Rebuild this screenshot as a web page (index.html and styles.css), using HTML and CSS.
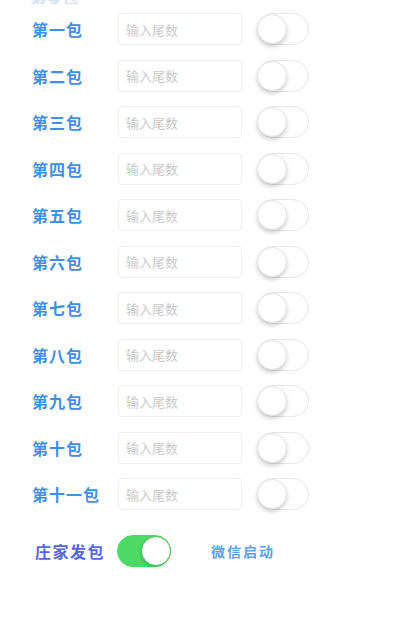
FILE: index.html
```html
<!DOCTYPE html>
<html lang="zh-CN">
<head>
<meta charset="utf-8">
<link rel="stylesheet" href="styles.css">
</head>
<body>
<div class="page">
  <div class="peek">第零包</div>
  <div class="list">
    <div class="row"><span class="label">第一包</span><span class="input">输入尾数</span><span class="switch"><span class="knob"></span></span></div>
    <div class="row"><span class="label">第二包</span><span class="input">输入尾数</span><span class="switch"><span class="knob"></span></span></div>
    <div class="row"><span class="label">第三包</span><span class="input">输入尾数</span><span class="switch"><span class="knob"></span></span></div>
    <div class="row"><span class="label">第四包</span><span class="input">输入尾数</span><span class="switch"><span class="knob"></span></span></div>
    <div class="row"><span class="label">第五包</span><span class="input">输入尾数</span><span class="switch"><span class="knob"></span></span></div>
    <div class="row"><span class="label">第六包</span><span class="input">输入尾数</span><span class="switch"><span class="knob"></span></span></div>
    <div class="row"><span class="label">第七包</span><span class="input">输入尾数</span><span class="switch"><span class="knob"></span></span></div>
    <div class="row"><span class="label">第八包</span><span class="input">输入尾数</span><span class="switch"><span class="knob"></span></span></div>
    <div class="row"><span class="label">第九包</span><span class="input">输入尾数</span><span class="switch"><span class="knob"></span></span></div>
    <div class="row"><span class="label">第十包</span><span class="input">输入尾数</span><span class="switch"><span class="knob"></span></span></div>
    <div class="row"><span class="label">第十一包</span><span class="input">输入尾数</span><span class="switch"><span class="knob"></span></span></div>
  </div>
  <div class="footer">
    <span class="banker">庄家发包</span>
    <span class="switch on"><span class="knob"></span></span>
    <span class="wechat">微信启动</span>
  </div>
</div>
</body>
</html>
```
FILE: styles.css
```css
html, body {
  margin: 0;
  padding: 0;
  background: #ffffff;
}
body {
  font-family: "Noto Sans CJK SC", "Noto Sans", sans-serif;
  width: 400px;
  height: 635px;
  overflow: hidden;
}
.page {
  display: flex;
  flex-direction: column;
}
.peek {
  height: 4px;
  overflow: hidden;
  padding-left: 30px;
  font-size: 16px;
  font-weight: bold;
  line-height: 16px;
  color: #cfe2f8;
  display: flex;
  align-items: flex-end;
}
.list {
  display: flex;
  flex-direction: column;
  padding-top: 1.75px;
}
.row {
  height: 46.5px;
  display: flex;
  align-items: center;
  padding-left: 32px;
}
.label {
  width: 86px;
  font-size: 16px;
  font-weight: bold;
  color: #3f8fe6;
  letter-spacing: 1px;
}
.input {
  box-sizing: border-box;
  width: 124px;
  height: 32px;
  border: 1px solid #efefef;
  border-radius: 4px;
  display: flex;
  align-items: center;
  padding-left: 7px;
  font-size: 13px;
  color: #c9c9c9;
}
.switch {
  box-sizing: border-box;
  margin-left: 15px;
  width: 52px;
  height: 32px;
  border-radius: 16px;
  border: 1.5px solid #e6e6e6;
  background: #ffffff;
  display: flex;
  align-items: center;
}
.knob {
  box-sizing: border-box;
  width: 30px;
  height: 30px;
  border-radius: 50%;
  background: #ffffff;
  border: 1px solid #e2e2e2;
  box-shadow: 0 3px 4px rgba(0, 0, 0, 0.18);
  margin-left: -1px;
}
.footer {
  display: flex;
  align-items: center;
  padding-left: 35px;
  margin-top: 18px;
  height: 32px;
}
.banker {
  font-size: 16px;
  font-weight: bold;
  color: #5566e0;
  width: 82px;
  letter-spacing: 1.5px;
}
.switch.on {
  margin-left: 0;
  width: 54px;
  background: #4cd964;
  border-color: #4cd964;
  justify-content: flex-end;
}
.switch.on .knob {
  margin-left: 0;
  margin-right: -1px;
  border-color: #3fc455;
  box-shadow: 0 2px 3px rgba(0, 0, 0, 0.15);
}
.wechat {
  margin-left: 40px;
  font-size: 14px;
  font-weight: bold;
  color: #5ba0ea;
  letter-spacing: 2px;
}
```
